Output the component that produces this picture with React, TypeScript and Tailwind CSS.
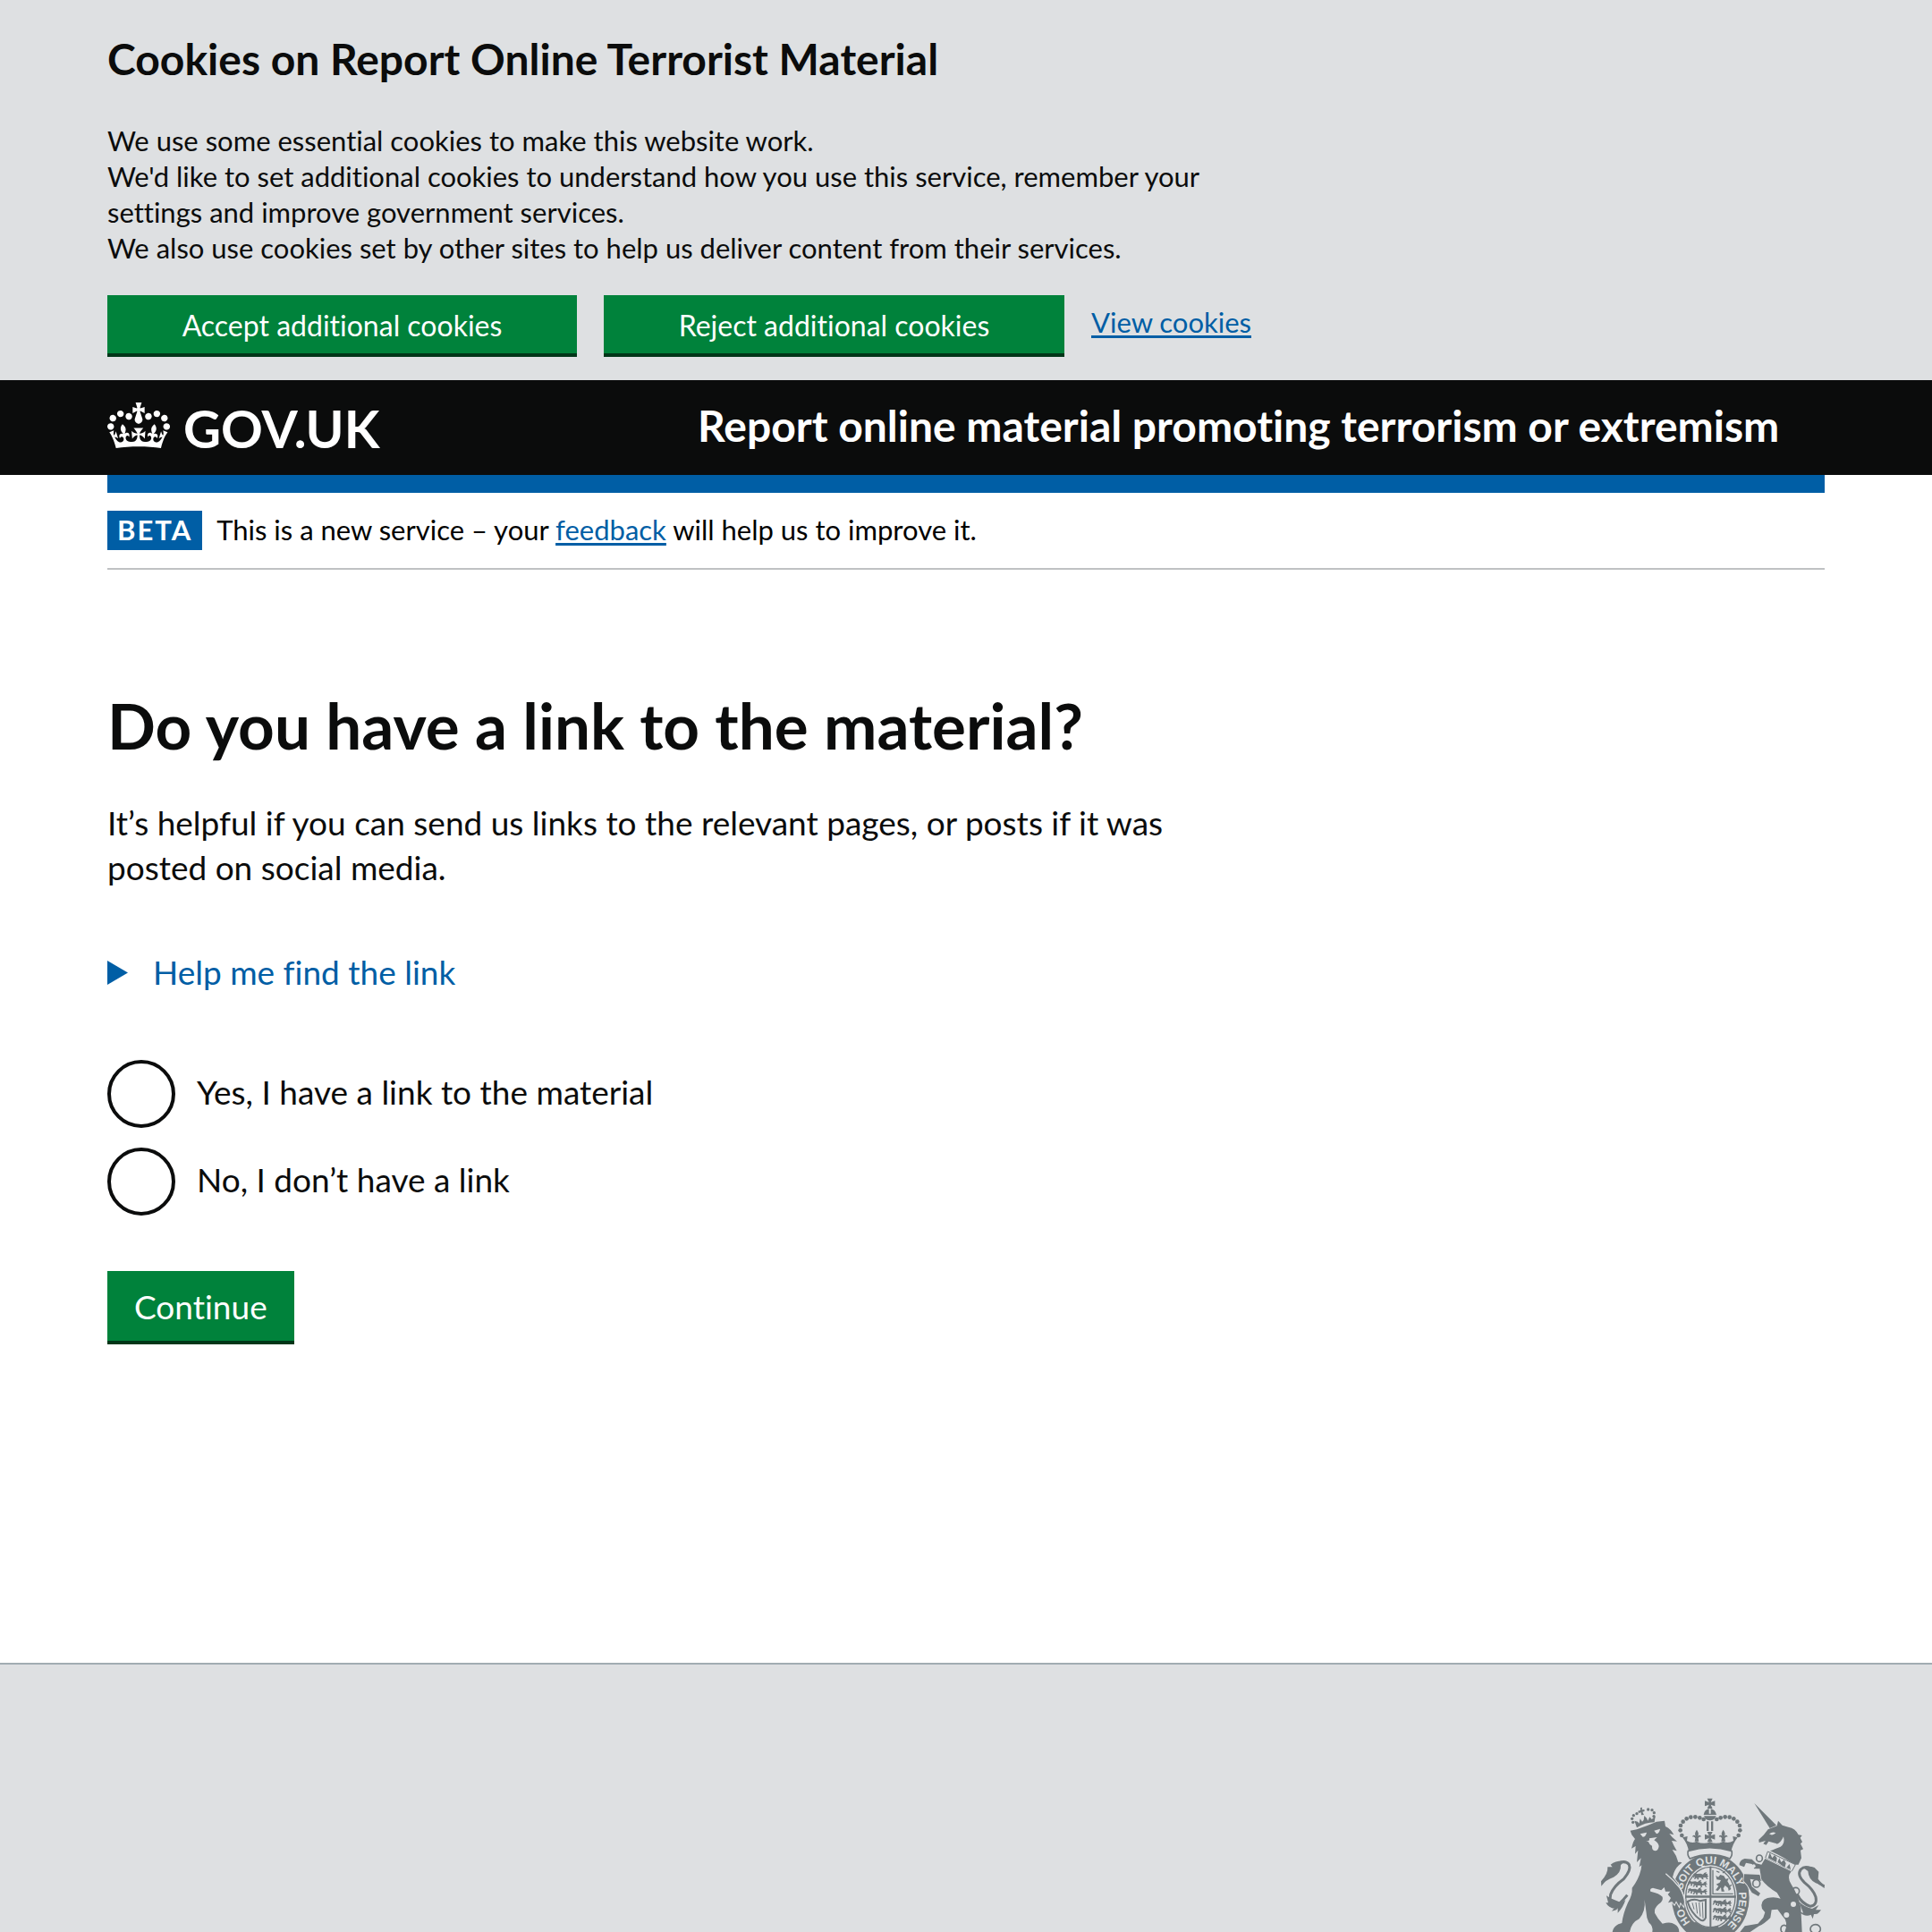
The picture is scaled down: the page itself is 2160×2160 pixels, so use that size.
const CROWN_BEADS: [number, number][] = [
  [331, 186], [326, 169], [327, 153], [335, 140], [347, 130], [361, 125], [376, 124], [391, 127], [404, 132],
  [521, 186], [526, 169], [525, 153], [517, 140], [505, 130], [491, 125], [476, 124], [461, 127], [448, 132],
];

const LION_CROWN_BEADS: [number, number][] = [
  [167, 142], [164, 130], [169, 119], [180, 113], [218, 99], [231, 101], [238, 110], [237, 122],
];

const FLEUR =
  'M0 -22 C7 -12 7 -6 3 0 C8 -6 15 -4 14 3 C12 0 7 2 5 7 L7 17 H-7 L-5 7 C-7 2 -12 0 -14 3 C-15 -4 -8 -6 -3 0 C-7 -6 -7 -12 0 -22Z';

const CROSS = 'M-9 -17 H9 L3 -4 L17 -9 V9 L3 4 L9 17 H-9 L-3 4 L-17 9 V-9 L-3 -4Z';

const SMALL_LION =
  'M0 4 L6 0 L12 3 L24 2 L32 5 L36 0 L44 -3 L42 3 L47 6 L41 9 L45 16 L39 15 L38 10 L28 11 L30 17 L24 16 L23 11 L13 11 L14 17 L8 17 L9 10 L5 9 L3 15 L-2 16 L1 8Z';

const MOTTO = 'HO\u00a0\u00a0\u00a0\u00a0\u00a0\u00a0SOIT QUI MALY \u00a0PENSE';

function GovCrown() {
  return (
    <svg viewBox="0 0 132 97" className="w-[70px] shrink-0" fill="currentColor" aria-hidden="true">
      <path
        fillRule="evenodd"
        d="M25 30.2c3.5 1.5 7.7-.2 9.1-3.7 1.5-3.6-.2-7.8-3.9-9.2-3.6-1.4-7.6.3-9.1 3.9-1.4 3.5.3 7.5 3.9 9zM9 39.5c3.6 1.5 7.8-.2 9.2-3.7 1.5-3.6-.2-7.8-3.9-9.1-3.6-1.5-7.6.2-9.1 3.8-1.4 3.5.3 7.5 3.8 9zM4.4 57.2c3.5 1.5 7.7-.2 9.1-3.8 1.5-3.6-.2-7.7-3.9-9.1-3.5-1.5-7.6.3-9.1 3.8-1.4 3.5.3 7.6 3.9 9.1zm38.3-21.4c3.5 1.5 7.7-.2 9.1-3.8 1.5-3.6-.2-7.7-3.9-9.1-3.6-1.5-7.6.3-9.1 3.8-1.3 3.6.4 7.7 3.9 9.1zm64.4-5.6c-3.6 1.5-7.8-.2-9.1-3.7-1.5-3.6.2-7.8 3.8-9.2 3.6-1.4 7.7.3 9.2 3.9 1.3 3.5-.4 7.5-3.9 9zm15.9 9.3c-3.6 1.5-7.7-.2-9.1-3.7-1.5-3.6.2-7.8 3.7-9.1 3.6-1.5 7.7.2 9.2 3.8 1.5 3.5-.3 7.5-3.8 9zm4.7 17.7c-3.6 1.5-7.8-.2-9.2-3.8-1.5-3.6.2-7.7 3.9-9.1 3.6-1.5 7.7.3 9.2 3.8 1.3 3.5-.4 7.6-3.9 9.1zM89.3 35.8c-3.6 1.5-7.8-.2-9.2-3.8-1.4-3.6.2-7.7 3.9-9.1 3.6-1.5 7.7.3 9.2 3.8 1.4 3.6-.3 7.7-3.9 9.1zM69.7 17.7l8.9 4.7V9.3l-8.9 2.8c-.2-.3-.5-.6-.9-.9L72.4 0H59.6l3.5 11.2c-.3.3-.6.5-.9.9l-8.8-2.8v13.1l8.8-4.7c.3.3.6.7.9.9l-5 15.4v.1c-.2.8-.4 1.6-.4 2.4 0 4.1 3.1 7.5 7 8.1h.2c.3 0 .7.1 1 .1.4 0 .7 0 1-.1h.2c4-.6 7.1-4.1 7.1-8.1 0-.8-.1-1.7-.4-2.4V34l-5.1-15.4c.4-.2.7-.6 1-.9zM66 92.8c16.9 0 32.8 1.1 47.1 3.2 4-16.9 8.9-26.7 14-33.5l-9.6-3.4c1 4.9 1.1 7.2 0 10.2-1.5-1.4-3-4.3-4.2-8.7L108.6 76c2.8-2 5-3.2 7.5-3.3-4.4 9.4-10 11.9-13.6 11.2-4.3-.8-6.3-4.6-5.6-7.9 1-4.7 5.7-5.9 8-.5 4.3-8.7-3-11.4-7.6-8.8 7.1-7.2 7.9-13.5 2.1-21.1-8 6.1-8.1 12.3-4.5 20.8-4.7-5.4-12.1-2.5-9.5 6.2 3.4-5.2 7.9-2 7.2 3.1-.6 4.3-6.4 7.8-13.5 7.2-10.3-.9-10.9-8-11.2-13.8 2.5-.5 7.1 1.8 11 7.3L80.2 60c-4.1 4.4-8 5.3-12.3 5.4 1.4-4.4 8-11.6 8-11.6H55.5s6.4 7.2 7.9 11.6c-4.2-.1-8-1-12.3-5.4l1.4 16.4c3.9-5.5 8.5-7.7 10.9-7.3-.3 5.8-.9 12.8-11.1 13.8-7.2.6-12.9-2.9-13.5-7.2-.7-5 3.8-8.3 7.1-3.1 2.7-8.7-4.6-11.6-9.4-6.2 3.7-8.5 3.6-14.7-4.6-20.8-5.8 7.6-5 13.9 2.2 21.1-4.7-2.6-11.9.1-7.7 8.8 2.3-5.5 7.1-4.2 8.1.5.7 3.3-1.3 7.1-5.7 7.9-3.5.7-9-1.8-13.5-11.2 2.5.1 4.7 1.3 7.5 3.3l-4.7-15.4c-1.2 4.4-2.7 7.2-4.3 8.7-1.1-3-.9-5.3 0-10.2l-9.5 3.4c5 6.9 9.9 16.7 14 33.5 14.8-2.1 30.8-3.2 47.7-3.2z"
      />
    </svg>
  );
}

function RoyalArms() {
  return (
    <svg viewBox="60 60 750 450" className="w-[250px] text-[#6f777b]" fill="currentColor" role="img" aria-label="Royal coat of arms">
      {/* garter ring and motto */}
      <ellipse cx="427" cy="395" rx="130" ry="147" />
      <path id="motto" d="M360 477 A96 114 0 1 1 460 502" fill="none" />
      <text fill="#dee0e2" className="font-['Liberation_Sans'] text-[36px] font-bold">
        <textPath href="#motto">{MOTTO}</textPath>
      </text>

      {/* quartered shield */}
      <ellipse cx="427" cy="393" rx="89" ry="107" fill="#dee0e2" />
      <ellipse cx="427" cy="393" rx="83" ry="101" fill="none" stroke="currentColor" strokeWidth="4" />
      <path d="M424 290 H430 V500 H424Z M342 388 H512 V395 H342Z" />
      <path d="M435 302 V382 H503 M468 312 l8 -6 M447 306 l10 4 M498 352 l-8 6" fill="none" stroke="currentColor" strokeWidth="4" />
      {[312, 338, 363].map((y, i) => (
        <g key={y}>
          <path d={SMALL_LION} transform={`translate(${i === 0 ? 370 : 352} ${y})`} />
          <path d={SMALL_LION} transform={`translate(${i === 0 ? 374 : 370} ${y + 5})`} />
        </g>
      ))}
      {[403, 428, 453].map((y) => (
        <g key={y}>
          <path d={SMALL_LION} transform={`translate(436 ${y})`} />
          <path d={SMALL_LION} transform={`translate(452 ${y + 4})`} />
        </g>
      ))}
      <path d="M445 320 L453 326 L460 318 L472 322 L478 332 L488 330 L484 340 L490 350 L496 366 L488 372 L486 362 L476 354 L470 364 L474 374 L464 374 L462 360 L452 372 L444 370 L454 356 L446 350 L458 344 L462 336 L448 334Z" />
      <path d="M350 408 Q372 396 392 406 L411 402 V462 Q404 476 394 470 Q362 448 350 408Z" fill="none" stroke="currentColor" strokeWidth="6" />
      <path d="M366 412 L372 434 M378 411 L383 448 M389 411 L393 458 M400 410 L402 464" stroke="currentColor" strokeWidth="3" />
      <path d="M360 492 Q372 468 386 482 L404 492 L424 496 L452 488 L456 498 L430 510 H354Z" />

      {/* imperial crown */}
      <path d={CROSS} transform="translate(425 79)" />
      <path d="M404 117 Q407 99 422 97 V113 H428 V97 Q443 99 447 117Z" />
      <path d="M405 121 H446 Q440 136 425 136 Q411 136 405 121Z" />
      <path d="M414 139 H421 V171 H414Z M429 139 H436 V171 H429Z" />
      {CROWN_BEADS.map(([x, y]) => (
        <circle key={`${x}-${y}`} cx={x} cy={y} r="7" />
      ))}
      <path d="M333 193 L350 189 L348 204 Q366 215 380 206 Q404 218 425 208 Q448 218 470 206 Q486 215 504 204 L502 189 L518 193 Q502 214 496 240 Q425 220 354 240 Q350 214 333 193Z" />
      <path d={FLEUR} transform="translate(381 189)" />
      <path d={FLEUR} transform="translate(470 189)" />
      <path d={CROSS} transform="translate(425 191)" />
      <path d="M352 238 Q425 216 498 238 Q502 252 492 264 Q425 238 358 264 Q348 252 352 238Z" fill="#dee0e2" stroke="currentColor" strokeWidth="5" />

      {/* lion */}
      <path
        stroke="#dee0e2"
        strokeWidth="6"
        paintOrder="stroke"
        d="M158 170 L180 166 Q214 154 246 140 L273 137 L276 156 Q294 164 304 184 L289 180 Q298 194 315 206 L297 204 Q303 220 314 238 L299 234 Q314 254 319 276 Q328 274 331 278 Q312 290 304 312 L300 326 L316 346 L330 374 L340 400 L337 424 L326 410 L322 424 L312 406 L306 418 L298 408 L285 412 L294 396 L284 384 L292 374 L276 374 L272 360 L262 370 L234 362 Q222 364 226 374 Q256 380 266 392 Q270 406 252 418 Q238 430 240 446 Q250 466 266 482 Q294 474 306 484 Q322 492 322 510 H232 Q236 492 220 478 L214 462 L206 402 Q210 440 188 466 Q162 478 156 510 H98 Q100 494 118 484 L130 480 Q134 448 150 412 Q166 384 164 362 Q186 334 194 300 L196 286 L188 292 L194 262 L180 276 L184 236 L174 248 L176 222 L162 230 Q168 204 174 198 L163 184Z"
      />
      <path d="M191 181 L213 176 Q210 191 200 191Z M238 170 L258 164 Q256 178 246 181Z" fill="#dee0e2" />
      <path d="M210 204 Q224 208 222 196 L248 192 L238 202 Q252 210 254 222 Q252 238 241 238 Q230 236 231 221 Q222 218 219 208Z" fill="#dee0e2" />
      <path d="M277 314 Q306 338 324 362 Q338 384 341 410" fill="none" stroke="#dee0e2" strokeWidth="4" />
      <path d="M148 386 Q118 424 100 426 Q86 416 92 384 Q102 356 136 332 Q162 302 154 284 Q142 268 116 280" fill="none" stroke="currentColor" strokeWidth="9" />
      <path d="M138 272 Q110 270 92 284 L98 292 L82 292 Q84 314 60 340 L61 356 Q76 334 102 326 Q128 312 126 286Z" />
      <path d="M90 396 L78 388 L84 412 L76 412 Q86 430 104 430 L96 440 Q112 438 116 430 L116 446 Q134 428 142 402 L128 412Z" />

      {/* lion's crown */}
      <path d="M180 160 L172 137 L183 140 L188 146 L191 130 L198 140 L203 134 L205 120 L213 128 L217 137 L223 124 L230 132 L242 122 L239 142 Q208 142 180 160Z" />
      <path d="M192 93 L198 92 L197 100 L205 99 L206 105 L199 107 L204 117 L195 118 L194 109 L186 111 L184 104 L192 102Z" />
      {LION_CROWN_BEADS.map(([x, y]) => (
        <circle key={`${x}-${y}`} cx={x} cy={y} r="5" />
      ))}

      {/* unicorn */}
      <path d="M574 78 L648 152 L626 162Z" />
      <path d="M620 166 L650 154 L654 137 L668 152 L688 158 Q712 162 722 184 L734 186 L728 194 L735 208 L729 214 L738 232 L729 236 L732 262 L722 284 L712 284 L696 276 L674 262 L652 250 L624 236 Q644 228 650 214 L622 206 L614 218 L604 214 L612 204 L590 210 L589 200 L606 184Z" />
      <path d="M624 181 Q636 172 646 178 Q638 186 630 184Z" fill="#dee0e2" />
      <path d="M672 190 Q678 214 662 224 Q642 232 632 236 Q622 240 612 230 Q634 230 648 216 Q664 210 672 190Z" fill="#dee0e2" />
      <path d="M619 240 L712 284 L700 306 L611 262Z" fill="#dee0e2" stroke="currentColor" strokeWidth="3" />
      <path d="M620 262 L626 244 L634 262 L642 252 L650 262 L648 276 Z M652 276 L658 262 L664 276 L674 268 L680 280 L676 294Z M682 294 L692 282 L696 300Z" />
      <g stroke="#dee0e2" strokeWidth="5" paintOrder="stroke">
        <path d="M540 316 L592 318 L606 340 L560 332 L566 358 L594 380 L588 390 L566 378 L550 352 L538 338Z" />
        <path d="M610 264 L698 307 Q682 326 698 350 Q720 384 730 426 L734 510 H676 Q690 476 668 456 L652 434 L632 436 L628 462 Q606 484 590 490 L560 510 H526 L542 490 L586 482 L604 462 L610 444 L600 432 Q592 404 618 396 Q642 390 662 398 L650 378 Q618 360 598 334 L592 298 L574 298 L566 282 L546 278 L540 292 L524 286 Q524 268 542 264 L566 266 L580 280 L598 284Z" />
      </g>
      <g fill="#dee0e2">
        <circle cx="705" cy="417" r="9" />
        <circle cx="682" cy="453" r="9" />
        <circle cx="572" cy="289" r="6" />
      </g>
      <g fill="none" stroke="currentColor" strokeWidth="5">
        <ellipse cx="591" cy="263" rx="10" ry="11" />
        <ellipse cx="713" cy="373" rx="12" ry="12" />
        <ellipse cx="581" cy="347" rx="12" ry="13" />
        <ellipse cx="674" cy="500" rx="11" ry="13" />
        <ellipse cx="779" cy="500" rx="17" ry="15" />
      </g>
      <path d="M718 384 Q732 414 762 424 Q786 420 780 392 Q772 368 742 344 Q716 318 730 300 Q742 288 762 296" fill="none" stroke="currentColor" strokeWidth="9" />
      <path d="M738 294 Q758 286 776 294 L790 308 L788 332 Q800 348 810 352 L809 363 Q796 352 780 346 Q756 334 754 306Z" />
      <path d="M724 408 L738 446 L722 440 Q744 462 764 452 L770 466 L774 450 Q788 452 798 436 L780 436 L790 420 L768 432 Q742 426 724 408Z" />
    </svg>
  );
}

function CookieBanner() {
  return (
    <section aria-label="Cookies on Report Online Terrorist Material" className="bg-[#dee0e2] px-[120px] pt-9 pb-[26px]">
      <div className="max-w-[1260px]">
        <h2 className="text-[48px] leading-[60px] font-bold">Cookies on Report Online Terrorist Material</h2>
        <p className="mt-[41px] text-[31px] leading-10">
          We use some essential cookies to make this website work.
          <br />
          We'd like to set additional cookies to understand how you use this service, remember your settings and improve
          government services.
          <br />
          We also use cookies set by other sites to help us deliver content from their services.
        </p>
      </div>
      <div className="mt-[33px] flex flex-wrap items-start gap-[30px]">
        <button type="button" className="mb-1 h-[65px] w-[525px] bg-[#00823b] pt-[3px] text-[32px] leading-10 text-white shadow-[0_4px_0_#003618]">
          Accept additional cookies
        </button>
        <button type="button" className="mb-1 h-[65px] w-[515px] bg-[#00823b] pt-[3px] text-[32px] leading-10 text-white shadow-[0_4px_0_#003618]">
          Reject additional cookies
        </button>
        <a href="#cookies" className="pt-2.5 text-[31px] leading-10 text-[#005ea5] underline decoration-[3px] underline-offset-[3px]">
          View cookies
        </a>
      </div>
    </section>
  );
}

function Header() {
  return (
    <header>
      <div className="bg-[#0b0c0c] px-[120px] pt-[21px] text-white">
        <div className="grid h-[85px] grid-cols-3 gap-[60px]">
          <a href="#home" className="flex items-baseline gap-[15px] text-[58px] leading-[66px] font-bold">
            <GovCrown />
            GOV.UK
          </a>
          <a href="#start" className="col-span-2 text-[48px] leading-[60px] font-bold whitespace-nowrap">
            Report online material promoting terrorism or extremism
          </a>
        </div>
      </div>
      <div className="mx-[120px] h-5 bg-[#005ea5]" />
    </header>
  );
}

function PhaseBanner() {
  return (
    <div className="mx-[120px] flex items-start gap-4 border-b-2 border-[#bfc1c3] py-5 text-[31px] leading-[42px] text-black">
      <strong className="h-11 bg-[#005ea5] px-[11px] font-bold tracking-[2px] text-white">BETA</strong>
      <p>
        This is a new service – your{' '}
        <a href="#feedback" className="text-[#005ea5] underline decoration-[3px] underline-offset-[3px]">
          feedback
        </a>{' '}
        will help us to improve it.
      </p>
    </div>
  );
}

function Radio({ id, value, label }: { id: string; value: string; label: string }) {
  return (
    <div className="flex items-center gap-6">
      <input
        type="radio"
        id={id}
        name="have-link"
        value={value}
        className="size-[76px] shrink-0 appearance-none rounded-full border-4 border-[#0b0c0c] bg-white checked:bg-[#0b0c0c] checked:shadow-[inset_0_0_0_14px_white]"
      />
      <label htmlFor={id} className="pb-1">
        {label}
      </label>
    </div>
  );
}

export default function App() {
  return (
    <div className="flex min-h-screen flex-col bg-white font-['Lato',sans-serif] text-[#0b0c0c] [font-variant-ligatures:none]">
      <CookieBanner />
      <Header />
      <PhaseBanner />

      <main className="px-[120px] pt-[134px] pb-[360px] text-[37px] leading-[50px]">
        <div className="max-w-[1260px]">
          <h1 id="question" className="text-[71px] leading-[80px] font-bold">
            Do you have a link to the material?
          </h1>
          <p className="mt-11">
            It’s helpful if you can send us links to the relevant pages, or posts if it was posted on social media.
          </p>
          <details className="mt-[67px]">
            <summary className="flex w-fit list-none items-center gap-7 text-[#005ea5]">
              <svg viewBox="0 0 23 27" className="w-[23px]" fill="currentColor" aria-hidden="true">
                <path d="M0 0 L23 13.5 L0 27Z" />
              </svg>
              Help me find the link
            </summary>
          </details>
          <form className="mt-[73px]">
            <fieldset aria-labelledby="question" className="flex flex-col gap-[22px]">
              <Radio id="link-yes" value="yes" label="Yes, I have a link to the material" />
              <Radio id="link-no" value="no" label="No, I don’t have a link" />
            </fieldset>
            <button type="submit" className="mt-[62px] block h-[78px] bg-[#00823b] px-[30px] pt-px text-white shadow-[0_4px_0_#003618]">
              Continue
            </button>
          </form>
        </div>
      </main>

      <footer className="flex grow items-start justify-end border-t-2 border-[#a1acb2] bg-[#dee0e2] px-[120px] pt-[149px]">
        <RoyalArms />
      </footer>
    </div>
  );
}
